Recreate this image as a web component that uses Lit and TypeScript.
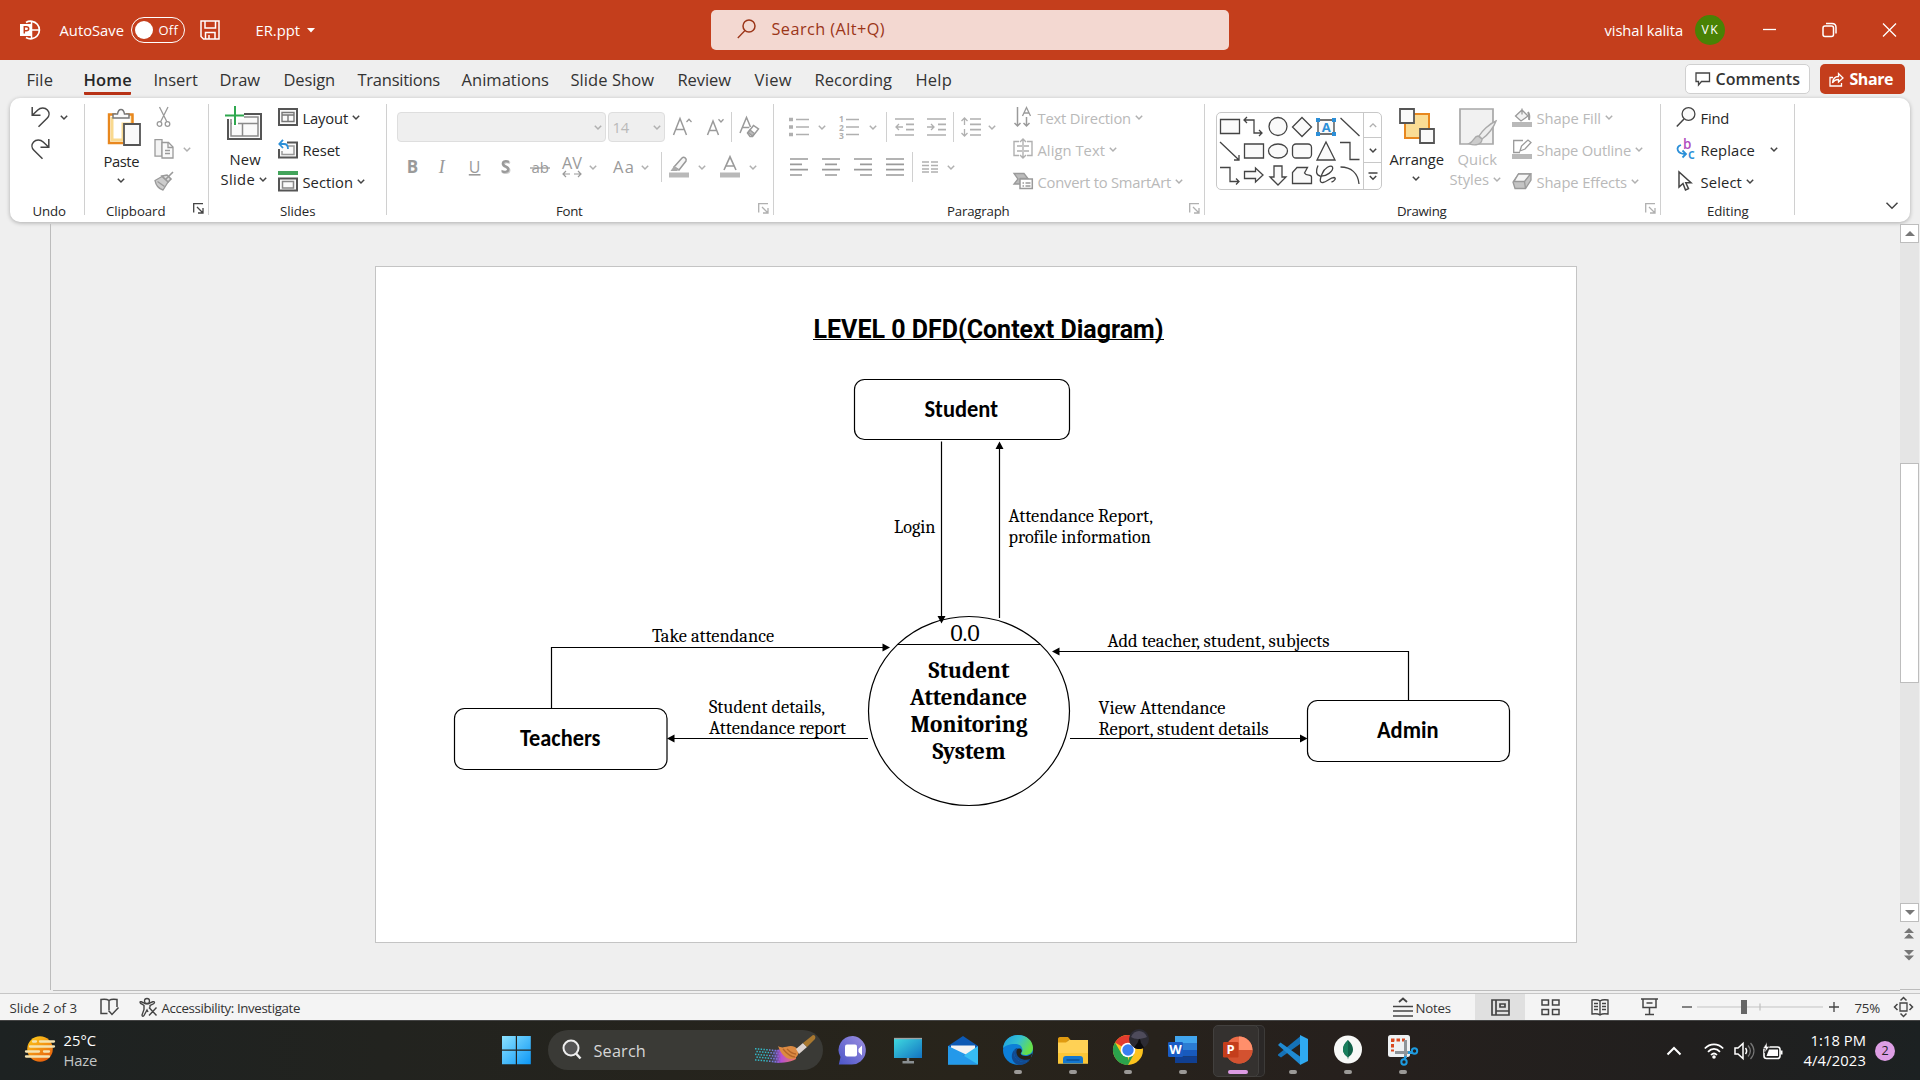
import { LitElement, html, svg, css, TemplateResult, SVGTemplateResult } from "lit";
import { customElement, property } from "lit/decorators.js";

/* ---------- text that keeps a given measure ---------- */

@customElement("fit-text")
class FitText extends LitElement {
  @property({ type: Number }) w = 0;
  @property() text = "";

  static styles = css`
    :host { display: inline-block; white-space: pre; flex: none; overflow: visible; }
    span { margin-left: -.5px; }
  `;

  updated() {
    const span = this.renderRoot.querySelector("span") as HTMLElement;
    span.style.letterSpacing = "0px";
    const natural = span.getBoundingClientRect().width;
    span.style.letterSpacing = `${(this.w + 1.5 - natural) / this.text.length}px`;
    this.style.width = `${this.w}px`;
  }

  render() {
    return html`<span>${this.text}</span>`;
  }
}

const T = (text: string, w: number, cls = "") =>
  html`<fit-text class=${cls} .text=${text} .w=${w}></fit-text>`;

const ic = (w: number, h: number, body: SVGTemplateResult, cls = "") =>
  html`<svg class="ic ${cls}" width=${w} height=${h} viewBox="0 0 ${w} ${h}" fill="none" stroke="currentColor" stroke-width="1.3">${body}</svg>`;

const chev = (cls = "") => ic(8, 5, svg`<path d="M.8 .8 4 4 7.2 .8" stroke-width="1.5"/>`, cls);
const vsep = () => html`<i class="vsep"></i>`;

/* ---------- ribbon icons ---------- */

const undo = ic(20, 20, svg`<path d="M1.2 0v8.3h8.3M1.5 8 6.8 3C9.5.4 14 .3 16.4 3c2.4 2.6 2 6-.3 8.300L7.500 19.800" stroke-width="1.5"/>`);
const redo = ic(20, 20, svg`<path d="M17.800 0v8.300H9.500M17.500 8 12.200 3C9.500.4 5 .3 2.600 3c-2.400 2.600-2 6 .3 8.300L11.500 19.800" stroke-width="1.5"/>`);
const launcher = (cls: string) => ic(11, 11, svg`<path d="M.7 9.500V.7H10M4 4l5.500 5.500M10 5v5H5" stroke-width="1.300"/>`, cls);

const paste = ic(34, 38, svg`
  <path d="M1 6h25v30H1z" fill="#fff" stroke="none"/><path d="M9 6.500H2v28.500h14" stroke="#e8871e" stroke-width="2.400"/>
  <path d="M5 9v23h11V16h9V6.500" stroke="#f9d98f" stroke-width="3"/><path d="M19 6.500h6.500V15" stroke="#e8871e" stroke-width="2.400"/>
  <path d="M6 10V6h4.500c.5-3 1.500-4.500 3.500-4.500S17 3 17.500 6H22v4z" fill="#fafafa" stroke="#777" stroke-width="1.500"/>
  <path d="M17 16h16v21H17z" fill="#fafafa" stroke="#555" stroke-width="1.800"/>`);
const cut = ic(20, 20, svg`<path d="M5.500 0 13 15M14 0 6.500 15"/><circle cx="5.500" cy="17" r="2.300"/><circle cx="13.500" cy="17" r="2.300"/>`, "gray");
const copy = ic(20, 20, svg`<path d="M1 .7h7v16.500H1z" fill="#f3f3f3"/><path d="M8 3.500h6.500l4.500 4.500v11H8z" fill="#fafafa"/><path d="M14 3.500V8.500h5M11 11.500h5M11 14.500h5"/>`, "gray");
const painter = ic(20, 20, svg`<path d="M19 1l-7 7M13 4l4 4-3 3-6-6z" fill="#ddd" stroke-width="1.600"/><path d="M8 5.500 1 9.500c1 5 4 8.500 8 9.500l5-8z" fill="#ccc"/><path d="M3.500 10.500l7 5"/>`, "gray");
const newSlide = ic(37, 34, svg`
  <path d="M3 8h33v25H3z" fill="#fafafa" stroke="#555" stroke-width="2"/>
  <path d="M6 11h27v19H6zM6 17.500h27M17.500 17.500V30" stroke="#8a8a8a" stroke-width="1.500"/>
  <path d="M10 0v20M0 10h19" stroke="#fff" stroke-width="6"/><path d="M10 0v19M0 9.500h19" stroke="#2fa84f" stroke-width="2"/>`);
const layout = ic(20, 20, svg`<path d="M1 2h18v16H1z" fill="#fafafa" stroke="#555" stroke-width="2"/><path d="M4 5.500h12v9H4zM4 8h12M10 8v6.500" stroke="#777" stroke-width="1.400"/>`);
const reset = ic(20, 20, svg`<path d="M9 3.500h10v15H1V10" fill="#fafafa" stroke="#555" stroke-width="2"/><path d="M9 7h7v8.500H4V12" stroke="#999" stroke-width="1.500"/><path d="M5 .8 1.300 5 5 9M1.500 5H6c2.500 0 4 1.500 4 5" stroke="#2b8fd8" stroke-width="1.800"/>`);
const section = ic(20, 20, svg`<path d="M0 0h20v4H0z" fill="#43a45b" stroke="none"/><path d="M1 7.500h18V19.500H1z" fill="#fafafa" stroke="#555" stroke-width="2"/><path d="M4.500 10.500h11v6.500h-11z" stroke="#888" stroke-width="1.500"/>`);

const glyph = (s: string, cls: string) => ic(16, 22, svg`<text x=".8" y="17" class=${cls}>${s}</text>`, "gray");
const growA = ic(20, 20, svg`<path d="M.5 18 7 1.500 13.500 18M2.800 12.500h8.400" stroke-width="1.500"/><path d="M13.500 5 16 2.300 18.500 5"/>`, "gray");
const shrinkA = ic(20, 20, svg`<path d="M1.500 18 7 4l5.500 14M3.500 13.500h7" stroke-width="1.500"/><path d="M12.500 2.300 15 5l2.500-2.700"/>`, "gray");
const clearA = ic(20, 22, svg`<path d="M1 17 7.500 1.500 11.500 11M3.300 11.500h7" stroke-width="1.500"/><path d="M8.500 17 14.500 9.500l5 3.500-6 7.500h-2.500z" fill="#fff" stroke-width="1.500"/><path d="M9 16.500l4.500 3.500 2-2.500-4.500-3.500z" fill="#bbb"/>`, "gray");
const strike = ic(20, 20, svg`<text x="1.500" y="15.500" class="t15">ab</text><path d="M0 11h20"/>`, "gray");
const avIcon = ic(22, 22, svg`<text x="0" y="12.500" class="t16" textLength="20" lengthAdjust="spacingAndGlyphs">AV</text><path d="M1 18h7M12 18h7M4 15l-3 3 3 3M16 15l3 3-3 3" stroke-width="1.200"/>`, "gray");
const aaIcon = ic(22, 20, svg`<text x="0" y="15.500" class="t16" textLength="21">Aa</text>`, "gray");
const highlight = ic(20, 22, svg`<path d="M5 11 13 2c2-2 5 .5 4 3l-7 9z" fill="#f6f6f6" stroke-width="1.500"/><path d="M5 10l-3.500 5H8l2-1.500z" fill="#aaa" stroke="none"/><path d="M0 16.500h20v5H0z" fill="#b9b9b9" stroke="none"/>`, "gray");
const fontColor = ic(20, 22, svg`<path d="M4 14 10 .8 16 14M6 10h8" stroke-width="1.600"/><path d="M0 16.500h20v5H0z" fill="#b9b9b9" stroke="none"/>`, "gray");
const bullets = ic(20, 20, svg`<path d="M0 2.500h4M0 10h4M0 17.500h4" stroke-width="3.500"/><path d="M7 2.500h13M7 10h13M7 17.500h13" stroke-width="1.700"/>`, "gray2");
const numbering = ic(20, 24, svg`<text x="0" y="7" class="t8">1</text><text x="0" y="15.500" class="t8">2</text><text x="0" y="23.500" class="t8">3</text><path d="M7 4.500h13M7 12h13M7 19.500h13" stroke-width="1.700"/>`, "gray2");
const outdent = ic(19, 20, svg`<path d="M0 2h19M11 7.300h8M11 12.600h8M0 18h19" stroke-width="1.700"/><path d="M8 10H1M4 7l-3 3 3 3"/>`, "gray2");
const indent = ic(19, 20, svg`<path d="M0 2h19M11 7.300h8M11 12.600h8M0 18h19" stroke-width="1.700"/><path d="M0 10h7M4 7l3 3-3 3"/>`, "gray2");
const spacing = ic(20, 20, svg`<path d="M9 2h11M9 7.300h11M9 12.600h11M9 18h11" stroke-width="1.700"/><path d="M3.500 1v7M.5 4l3-3 3 3M3.500 12v7M.5 16l3 3 3-3"/>`, "gray2");
const alignL = ic(19, 20, svg`<path d="M0 2h18M0 7.300h12M0 12.600h18M0 18h12" stroke-width="1.700"/>`, "gray");
const alignC = ic(19, 20, svg`<path d="M0 2h18M3 7.300h12M0 12.600h18M3 18h12" stroke-width="1.700"/>`, "gray");
const alignR = ic(19, 20, svg`<path d="M0 2h18M6 7.300h12M0 12.600h18M6 18h12" stroke-width="1.700"/>`, "gray");
const alignJ = ic(19, 20, svg`<path d="M0 2h18M0 7.300h18M0 12.600h18M0 18h18" stroke-width="1.700"/>`, "gray");
const columns = ic(17, 16, svg`<path d="M0 3h7M9 3h7M0 6.500h7M9 6.500h7M0 10h7M9 10h7M0 13h7M9 13h7" stroke-width="1.300"/>`, "gray2");
const textDir = ic(20, 20, svg`<path d="M4.500 0v19M1.500 16l3 3 3-3M13.500 10v9M10.500 16l3 3 3-3" stroke-width="1.500"/><path d="M9.500 9 13.500 .5 17.500 9M11 6h5"/>`, "gray");
const alignText = ic(20, 20, svg`<path d="M6 2.500H1v14h5M14 2.500h5v14h-5M4 7h5M11 7h5M4 12h5M11 12h5M10 0v19M7 3l3-3 3 3M7 16l3 3 3-3" stroke-width="1.400"/>`, "gray2");
const smartArt = ic(20, 20, svg`<path d="M1 2.500h10l4 5H7.500v5.500H1L5 8z" fill="#bbb"/><path d="M7 8h12.300v9.500H7z" fill="#fff" stroke-width="1.500"/><path d="M9.500 12h1.500M12.500 12h5M9.500 15h1.500M12.500 15h5"/>`, "gray");

const SHAPES: SVGTemplateResult[] = [
  svg`<path d="M2.500 4.500h19v14h-19z" fill="#fafafa"/>`,
  svg`<path d="M5 2 2 5l3 3M2 5h10v13h8M17 15l3 3-3 3"/>`,
  svg`<circle cx="12" cy="11.500" r="9" fill="#fafafa"/>`,
  svg`<path d="M12 2.500l9.500 9.500-9.500 9.500L2.500 12z" fill="#fafafa"/>`,
  svg`<path d="M4 5h16v14H4z" fill="#fafafa"/><path d="M2 3h4v4H2zM18 3h4v4h-4zM2 17h4v4H2zM18 17h4v4h-4z" fill="#2b8fd8" stroke="none"/><text x="7.800" y="16.500" class="blueA">A</text>`,
  svg`<path d="M2.500 3l19 18"/>`,
  svg`<path d="M2 3l19 18M21 16v5h-5"/>`,
  svg`<path d="M2.500 5h19v14h-19z" fill="#fafafa"/>`,
  svg`<ellipse cx="12" cy="12" rx="9.500" ry="7" fill="#fafafa"/>`,
  svg`<rect x="2.500" y="5" width="19" height="14" rx="3.500" fill="#fafafa"/>`,
  svg`<path d="M12 3l9 18H3z" fill="#fafafa"/>`,
  svg`<path d="M2 3.500h10v17h9.500"/>`,
  svg`<path d="M2 4.500h10v14h9M18 15.500l3 3-3 3"/>`,
  svg`<path d="M2.500 8.500h11V5l7.500 7-7.500 7v-3.500h-11z" fill="#fafafa"/>`,
  svg`<path d="M8 3h8v11h4l-8 8-8-8h4z" fill="#fafafa"/>`,
  svg`<path d="M7 4.500h10.500l-3 5.500c2 3.500 7 1 7 4v6.500h-19V9.500z" fill="#fafafa"/>`,
  svg`<path d="M4 2.500C1.500 8 2 12 6 13c6 1 14-5 12.500-9C17 1.500 10 5 8 11c-2 5-3 9 1 8.500 4-.5 7-5 11-5 3 .5 0 4-2.500 4.500"/>`,
  svg`<path d="M2.500 4C13 4 20 10 21 21"/>`,
];

const arrange = ic(36, 36, svg`<path d="M6 6h24v24H6z" fill="#fadc94" stroke="#e8871e" stroke-width="2"/><path d="M1 1h14v14H1zM21 21h14v14H21z" fill="#fafafa" stroke="#555" stroke-width="1.800"/>`);
const quick = ic(39, 38, svg`<path d="M2 1h33v35H2z" fill="#f1f1f1" stroke="#a8a8a8" stroke-width="1.700"/><path d="M38 13c-7 3-14 10-17 15l3 3c6-4 12-12 14-18z" fill="#eee" stroke="#aaa" stroke-width="1.400"/><path d="M20 28c-4 0-4 6-9 7.500 6 3 13 1 13-4.500z" fill="#ccc" stroke="#aaa"/>`);
const fill = ic(20, 20, svg`<path d="M10 1.500v6M10 3l6 6-7 5-5.500-5L10 3z" fill="#f3f3f3"/><path d="M16 5c2 3 1.500 5 1 8" stroke-width="2"/><path d="M0 15h20v5H0z" fill="#b9b9b9" stroke="none"/>`, "gray");
const outline = ic(20, 20, svg`<path d="M11 1.500H1.700v12H8"/><path d="M8 12l1.500-5L16 1l3 2.500-6 6.500z" fill="#fff"/><path d="M0 15h20v5H0z" fill="#b9b9b9" stroke="none"/>`, "gray");
const effects = ic(20, 20, svg`<path d="M1 11 6.500 3H19v6l-5.500 8.500H3z" fill="#c4c4c4"/><path d="M6.500 3 2 10.500h10.500L18.500 3z" fill="#f6f6f6"/><path d="M12.500 10.500l1 7"/>`, "gray");
const find = ic(20, 20, svg`<circle cx="12.500" cy="7" r="6.400" fill="#fafafa"/><path d="M8 12 .8 19.500" stroke-width="1.500"/>`);
const replace = ic(20, 20, svg`<text x="7" y="9.500" class="repB">b</text><text x="12" y="20" class="repC">c</text><path d="M5 6C-.5 8 .5 15 9.500 15M6.500 11.500 10 15l-3.500 3.500" stroke="#2b8fd8" stroke-width="1.800"/>`);
const select = ic(20, 20, svg`<path d="M3 1v15l4-3.500 2.500 6.500 3-1.300-2.700-6H15z" fill="#fff" stroke-width="1.500"/>`);

/* ---------- taskbar icons ---------- */

const haze = ic(32, 30, svg`<defs><linearGradient id="hz" x1="0" y1="0" x2=".6" y2="1"><stop offset="0" stop-color="#ffd21c"/><stop offset="1" stop-color="#e8620c"/></linearGradient></defs>
  <circle cx="15" cy="15" r="12.800" fill="url(#hz)" stroke="none"/>
  <path d="M8 7.500h3M15 7.500h14M5 12.500h24M1 17.500h13M19 17.500h5M1 22.500h23" stroke="#f5e3b0" stroke-width="2.300" stroke-linecap="round"/>`);
const start = ic(30, 30, svg`<defs><linearGradient id="st" x1="0" y1="0" x2="1" y2="1"><stop offset="0" stop-color="#8ce2ff"/><stop offset="1" stop-color="#0c97f5"/></linearGradient></defs>
  <path d="M0 1h13.800v13.500H0zM15 1h13.800v13.500H15zM0 15.800h13.800v13.500H0zM15 15.800h13.800v13.500H15z" fill="url(#st)" stroke="none"/>`);
const lens = ic(20, 22, svg`<circle cx="9" cy="9" r="7.500" fill="#555" stroke="#eee" stroke-width="2"/><path d="M14 14.500l4.500 5" stroke="#eee" stroke-width="2.500"/>`);
const dots = Array.from({ length: 45 }, (_, i) => {
  const c = i % 9, r = Math.floor(i / 9);
  return svg`<rect x=${1 + c * 2.8 + (r % 2) * 1.4} y=${13 + r * 2.8 + c * .25} width="1.500" height="1.500" fill=${c < 5 ? "#35b6c4" : "#7487dc"} stroke="none"/>`;
});
const brush = ic(64, 30, svg`<defs><linearGradient id="bp" x1="0" x2="1"><stop offset="0" stop-color="#5c6ae0" stop-opacity="0"/><stop offset=".4" stop-color="#b44fd6"/><stop offset="1" stop-color="#f07a5a"/></linearGradient></defs>
  ${dots}<path d="M17 16c9-2 13-3 23-1l2 9c-6 4-17 4-25 4z" fill="url(#bp)" stroke="none"/>
  <path d="M24 11c6 4 10-2 17 1 5 3 4 9 0 11-6 3-13-1-17-12z" fill="#dc8a42" stroke="none"/><path d="M29 14c5 6 8 8 12 8M33 14c3 3 6 5 9 5" stroke="#b4652a"/>
  <path d="M42 14 49 8l4 4-8 7z" fill="#dcd3cf" stroke="none"/><path d="M49 8 59 0c2 0 3 2 2 4l-8 8z" fill="#a9782f" stroke="none"/>`);
const chat = svg`<defs><linearGradient id="ch" x1="1" y1="0" x2="0" y2="1"><stop offset="0" stop-color="#9d8fe0"/><stop offset="1" stop-color="#4b55c8"/></linearGradient></defs>
  <path d="M15 1a14 14 0 1 1-3 28.500H.8L2.500 22A14 14 0 0 1 15 1z" fill="url(#ch)" stroke="none"/><rect x="7" y="9.500" width="12" height="12" rx="2" fill="#fff" stroke="none"/><path d="M20.500 14l3.500-3.500v10L20.500 17z" fill="#fff" stroke="none"/>`;
const monitor = svg`<defs><linearGradient id="mo" x1="0" y1="0" x2="1" y2="1"><stop offset="0" stop-color="#3fdbe0"/><stop offset="1" stop-color="#1373c2"/></linearGradient></defs>
  <path d="M1 3h28v20H1z" fill="url(#mo)" stroke="none"/><path d="M1 3.500h28" stroke="#9ea4a6"/><path d="M15 23v4M9.500 27.300h11.500" stroke="#8a8f92" stroke-width="2.400"/>`;
const mail = svg`<path d="M0 11 15 1l15 10v4H0z" fill="#0c59b4" stroke="none"/><path d="M3 10.500h24V20H3z" fill="#f3f3f3" stroke="none"/><path d="M0 11l15 10 15-10v18.500H0z" fill="#36bdf3" stroke="none"/><path d="M0 29.500V11l30 18.500z" fill="#2499ea" stroke="none"/><path d="M0 11v1l15 9 3-1.500z" fill="#2499ea" stroke="none"/>`;
const edge = svg`<defs><linearGradient id="e1" x1="0" y1="0" x2="1" y2=".4"><stop offset="0" stop-color="#1b9de2"/><stop offset=".55" stop-color="#35c1d0"/><stop offset="1" stop-color="#66e04a"/></linearGradient></defs>
  <circle cx="15" cy="15" r="15" fill="#0d7fd8" stroke="none"/>
  <path d="M0 13C1 5 7 0 15 0c9 0 15 6 15 13 0 5-4 7-7.500 7-4 0-5-1.500-3.500-3 1.500-3-.5-8-7-8C6 9 2 11 0 13z" fill="url(#e1)" stroke="none"/>
  <path d="M12 14c-3 6 1 13 9 13 3 0 5-1 6.500-2.500C25 28 21 30 16 30 9 29 6 20 12 14z" fill="#114a91" stroke="none"/>
  <path d="M18.500 17c-2 2 0 4 4.500 4 2.500 0 5-1.500 6.500-3.500L27.500 24.500C24 27 13 26 12 18c0-3 3-5 5-4.500 2 .5 2 2.500 1.500 3.500z" fill="#262219" stroke="none"/>
  <path d="M12 14c-3 6 1 13 9 13 3 0 5.500-1.500 6.500-3-6 2-13 0-14-6-.2-2 .5-4 1.500-5-1 0-2.500.5-3 1z" fill="#114a91" stroke="none"/>`;
const folder = svg`<path d="M0 4c0-1 .5-2 2-2h8l3 3.500h-3L8 10H0z" fill="#e09a10" stroke="none"/><path d="M0 7.500h8L11 5h19v23.500H0z" fill="#ffd155" stroke="none"/><path d="M0 18h30v10.500H0z" fill="#fbc637" stroke="none"/><path d="M5 28.500V24c0-2 1-3 3-3h14c2 0 3 1 3 3v4.500z" fill="#1377cf" stroke="none"/><path d="M8.500 25h13" stroke="#0a4f97" stroke-width="1.500"/>`;
const chrome = svg`<circle cx="15" cy="15" r="15" fill="#fcc31e" stroke="none"/><path d="M15 15 2 7.500A15 15 0 0 1 28 7.500L15 8z" fill="#e33b2e" stroke="none"/><path d="M2 7.500 8.500 18.700 15 22l0 8A15 15 0 0 1 2 7.500z" fill="#2ba24c" stroke="none"/><path d="M21 19 15 30l-2-.1L17 21z" fill="#2ba24c" stroke="none"/>
  <circle cx="15" cy="15" r="7.300" fill="#fff" stroke="none"/><circle cx="15" cy="15" r="5.700" fill="#3a7ff0" stroke="none"/>
  <circle cx="26" cy="4" r="10" fill="#2c2b33" stroke="none"/><path d="M18 2c3-8 13-8 16 0-4 2-12 3-16 0z" fill="#5d5a6c" stroke="none" opacity=".7"/><path d="M26 4c2 0 1.500 3 2 4l3 4.500c-3 2-7 2-10 0L24.500 8z" fill="#0b0b0c" stroke="none"/>`;
const word = svg`<path d="M7 1h22v7H7z" fill="#41a5ee" stroke="none"/><path d="M7 8h22v7H7z" fill="#2b7cd3" stroke="none"/><path d="M7 15h22v6.500H7z" fill="#185abd" stroke="none"/><path d="M7 21.500h22V28H7z" fill="#103f91" stroke="none"/><rect x="0" y="7" width="15" height="15" rx="1.200" fill="#1a5cc4" stroke="none"/><text x="1.300" y="19" class="badgeT" textLength="12.500" lengthAdjust="spacingAndGlyphs">W</text>`;
const ppt = svg`<circle cx="16" cy="15" r="13.500" fill="#ed6c47" stroke="none"/><path d="M16 1.500A13.500 13.500 0 0 1 29.500 15H16z" fill="#ff8f6b" stroke="none"/><path d="M2.500 15h27a13.500 13.500 0 0 1-27 0z" fill="#d35230" stroke="none"/><rect x="0" y="7" width="15.500" height="15.500" rx="1.200" fill="#c43e1c" stroke="none"/><text x="3.500" y="19" class="badgeT">P</text>`;
const vscode = svg`<path d="M0 19.500 22 1.500V9L3 22.500 0 20.500z" fill="#1572b8" stroke="none"/><path d="M0 10l2.500-2.500L22 21.500v8z" fill="#1f8ad2" stroke="none"/><path d="M22 0l8 4v22l-8 4z" fill="#2fa9f0" stroke="none"/>`;
const mongo = svg`<circle cx="15" cy="14.500" r="14" fill="#f7f8f7" stroke="none"/><path d="M15 5c4 4 5 7 5 9.500 0 4-3 6.500-4.500 7.500l-.5 2.500-.5-2.500C13 21 10 18.500 10 14.500 10 12 11 9 15 5z" fill="#116149" stroke="none"/><path d="M15 5v17c-1.500-1-5-3.500-5-7.500C10 12 11 9 15 5z" fill="#1a7f5e" stroke="none"/>`;
const snip = svg`<rect x="0" y="0" width="22" height="22" rx="2.500" fill="#eef1f3" stroke="none"/><path d="M3 5h14M4.500 3.500v13" stroke="#d9481f" stroke-width="3" stroke-dasharray="3.500 2"/><path d="M17.500 5v18M7 17.500h17" stroke="#8d9499" stroke-width="3"/><circle cx="26.500" cy="16" r="2.700" stroke="#1d9be0" stroke-width="2"/><circle cx="16" cy="27" r="2.700" stroke="#1d9be0" stroke-width="2"/><path d="M17.500 21l-1 4M20 17.500h4" stroke="#1d9be0" stroke-width="2.500"/>`;

const APPS: { icon: SVGTemplateResult; state: string }[] = [
  { icon: chat, state: "" }, { icon: monitor, state: "" }, { icon: mail, state: "" },
  { icon: edge, state: "open" }, { icon: folder, state: "open" }, { icon: chrome, state: "open" },
  { icon: word, state: "open" }, { icon: ppt, state: "open active" }, { icon: vscode, state: "open" },
  { icon: mongo, state: "open" }, { icon: snip, state: "open" },
];

/* ---------- slide diagram ---------- */

type Label = [string, number, number, number, string];
const LABELS: Label[] = [
  ["Login", 894, 533, 41.5, "flow"],
  ["Attendance Report,", 1008.5, 522, 144.5, "flow"],
  ["profile information", 1008.5, 543, 142.5, "flow"],
  ["Take attendance", 652, 642, 122, "flow"],
  ["Student details,", 709, 713, 116, "flow"],
  ["Attendance report", 709, 734, 137, "flow"],
  ["Add teacher, student, subjects", 1107.5, 647, 222, "flow"],
  ["View Attendance", 1098.5, 714, 127, "flow"],
  ["Report, student details", 1098.5, 735, 170, "flow"],
  ["0.0", 950.5, 641, 29, "num"],
  ["Student", 928.5, 678, 81, "proc"],
  ["Attendance", 910, 705, 117, "proc"],
  ["Monitoring", 910.5, 732, 117, "proc"],
  ["System", 932.5, 759, 73, "proc"],
  ["Student", 924.5, 417, 73.5, "entity"],
  ["Teachers", 520, 746, 80.5, "entity"],
  ["Admin", 1377, 738, 61.5, "entity"],
  ["LEVEL 0 DFD(Context Diagram)", 813.5, 338, 350, "title"],
];

const TABS: [string, number][] = [
  ["File", 25], ["Home", 47], ["Insert", 43], ["Draw", 39], ["Design", 50], ["Transitions", 81],
  ["Animations", 86], ["Slide Show", 82], ["Review", 52], ["View", 36], ["Recording", 76], ["Help", 35],
];

@customElement("app-root")
class AppRoot extends LitElement {
  static styles = css`
    :host { display: flex; flex-direction: column; width: 1920px; height: 1080px; overflow: hidden; background: #efefef; color: #262626; font: 14.75px/20px "Open Sans", "Noto Sans", sans-serif; }
    * { box-sizing: border-box; }
    .ic { display: block; flex: none; overflow: visible; color: #444; }
    .ic text { stroke: none; fill: currentColor; }
    .gray, .gray .ic { color: #9a9a9a; }
    .gray2 { color: #b0b0b0; }
    .dim { color: #b9b9b9; }
    .dim .ic.chv, .chv.soft { color: #b0b0b0; }
    .t15 { font-size: 15px; } .t16 { font-size: 16.5px; } .t8 { font-size: 8.5px; font-weight: 700; }
    .blueA { font-size: 13px; font-weight: 700; }
    .ic text.blueA { fill: #2b8fd8; }
    .repB, .repC { font-size: 13.5px; font-weight: 600; }
    .ic text.repB { fill: #b04fc0; } .ic text.repC { fill: #2b8fd8; }
    .gB { font-size: 17px; font-weight: 700; }
    .gI { font-size: 18px; font-style: italic; font-family: "Liberation Serif", serif; }
    .gU { font-size: 16px; text-decoration: underline; }
    .gS { font-size: 17px; font-weight: 700; filter: drop-shadow(1px 1px 0 #ccc); }

    .titlebar { height: 60px; flex: none; background: #c43e1c; color: #fff; display: flex; align-items: center; padding-left: 20px; }
    .titlebar .ic { color: #fff; }
    .autosave { margin-left: 20px; }
    .toggle { width: 54px; height: 26px; border: 1.5px solid #fff; border-radius: 13px; margin: 0 15px 0 8px; display: flex; align-items: center; padding-left: 3px; gap: 6px; font-size: 13px; }
    .knob { width: 18px; height: 18px; border-radius: 50%; background: #fff; }
    .doc { margin-left: 36px; }
    .caret { margin-left: 8px; }
    .search { width: 518px; height: 40px; border-radius: 5px; background: #f3d8d1; color: #9b3518; margin-left: 396px; padding: 0 0 2px 26px; display: flex; align-items: center; gap: 15px; font-size: 16.25px; }
    .search .ic { color: #9b3518; }
    .user { margin-left: 376px; }
    .avatar { width: 30px; height: 30px; border-radius: 50%; background: #498205; margin-left: 13px; display: grid; place-items: center; font-size: 12.25px; }
    .win { display: grid; grid-template-columns: 60px 60px 20px; margin-left: 37px; }

    .tabs { height: 38px; flex: none; display: grid; grid-template-columns: 57px 70px 66px 64px 74px 104px 109px 107px 77px 60px 101px 769px 135px 85px; padding-left: 27px; font-size: 16.5px; color: #333; }
    .tab { height: 35px; padding-top: 10px; justify-self: start; }
    .tab.on { font-weight: 600; color: #262626; border-bottom: 3px solid #b83216; border-radius: 1px; }
    .btn { height: 30px; margin-top: 4px; border-radius: 5px; display: flex; align-items: center; font-weight: 600; }
    .comments { width: 125px; background: #fff; border: 1px solid #d0d0d0; padding-left: 9px; gap: 5px; font-size: 16px; }
    .share { width: 85px; background: #c43e1c; color: #fff; padding-left: 9px; gap: 6px; font-size: 16px; font-weight: 700; }
    .share .ic { color: #fff; }

    .ribbon { margin: 0 10px; height: 124px; flex: none; background: #fff; border-radius: 10px; box-shadow: 0 1px 4px rgba(0,0,0,.28); display: flex; }
    .rsep { width: 1px; height: 111px; margin-top: 6px; background: #d0d0d0; flex: none; }
    .group { display: grid; grid-template-rows: 103px 20px; flex: none; }
    .body { display: flex; align-items: flex-start; }
    .foot { display: flex; align-items: center; font-size: 13.25px; padding-right: 4px; }
    .foot .mid { flex: 1; display: flex; justify-content: center; padding-right: 7px; }
    .foot.plain { padding-right: 0; } .foot.plain .mid { padding-right: 0; }
    .g-undo .foot.plain .mid { padding-left: 4px; }
    .foot .ic { margin-top: -5px; }
    .g-undo { width: 74px; } .g-clip { width: 123px; } .g-slides { width: 177px; } .g-font { width: 386px; }
    .g-para { width: 430px; } .g-draw { width: 455px; } .g-edit { width: 133px; }
    .stack { display: grid; grid-template-rows: 20px 20px 20px; gap: 12px; padding-top: 9px; }
    .stack fit-text { margin-top: 1px; height: 19px; }
    .line { display: flex; align-items: center; gap: 5px; }
    .g-undo .stack { padding-left: 21px; }
    .g-undo .line { gap: 9px; }
    .g-clip .body { padding-left: 19px; }
    .pastecol { width: 38px; padding-top: 10px; margin-right: 12px; }
    .pastecol .big { margin-left: 3px; margin-bottom: 5px; }
    .pastecol .low { margin: 7px 0 0 13px; }
    .g-clip .line { gap: 9px; }
    .g-slides .body { padding-left: 12px; gap: 12px; }
    .newcol { width: 45px; padding-top: 8px; }
    .newcol .big { margin: 0 0 9px 4px; }
    .newcol .n { padding-left: 9px; }
    .vsep { width: 1px; height: 30px; background: #d0d0d0; }
    .toolrows { display: grid; grid-template-rows: 30px 30px; gap: 10px; padding-top: 14px; }
    .grid { display: grid; align-items: center; justify-items: start; }
    .g-font .toolrows { padding-left: 10px; }
    .f1 { grid-template-columns: 211px 65px 33px 25px 8px 20px; }
    .f2 { grid-template-columns: 32px 30px 32px 30px 32px 27px 24px 28px 20px 8px 29px 22px 29px 8px; padding-left: 9px; }
    .combo { height: 30px; border: 1px solid #dedede; border-radius: 4px; background: #efefef; color: #b9b9b9; display: flex; align-items: center; justify-content: space-between; padding: 0 3px 0 4px; }
    .combo.name { width: 209px; justify-content: flex-end; } .combo.size { width: 57px; }
    .g-para .toolrows { padding-left: 15px; }
    .p1 { grid-template-columns: 29px 21px 30px 17px 9px 32px 26px 8px 27px 8px; }
    .p2 { grid-template-columns: 32px 32px 32px 26px 10px 25px 8px; padding-left: 1px; }
    .g-para .stack { margin-left: 17px; }
    .g-draw .body { padding-left: 11px; }
    .gallery { width: 166px; height: 78px; margin-top: 14px; border: 1px solid #c8c8c8; border-radius: 5px; display: grid; grid-template-columns: 147px 17px; flex: none; }
    .shapes { display: grid; grid-template-columns: repeat(6, 24px); grid-template-rows: repeat(3, 24px); padding: 2px 0 0 1px; border-right: 1px solid #c8c8c8; }
    .scroller { display: grid; grid-template-rows: 25px 25px 26px; }
    .scroller span { display: grid; place-items: center; border-bottom: 1px solid #c8c8c8; }
    .scroller span:last-child { border-bottom: 0; }
    .arrcol { width: 53px; margin-left: 8px; padding-top: 10px; }
    .arrcol .big { margin: 0 0 5px 9px; }
    .arrcol .low { margin: 7px 0 0 22px; }
    .quickcol { width: 50px; margin-left: 7px; padding-top: 10px; }
    .quickcol .big { margin: 0 0 3px 8px; }
    .quickcol .n { padding-left: 8px; }
    .g-draw .stack { margin-left: 12px; }
    .g-edit .stack { padding-left: 15px; }
    .wide { margin-left: 11px; }
    .collapse { margin: 104px 12px 0 auto; }

    .work { flex: 1; display: flex; min-height: 0; }
    .thumbs { width: 51px; border-right: 1px solid #bcbcbc; margin: 2px 0 3px; }
    .canvas { flex: 1; margin-left: 2px; border-bottom: 1px solid #bcbcbc; margin-bottom: 2px; padding: 44px 0 0 322px; }
    .slide { display: block; width: 1202px; height: 677px; background: #fff; outline: 1px solid #c4c4c4; outline-offset: -1px; }
    .slide text { fill: #000; }
    .flow, .num, .proc { font-family: Cambria, Caladea, "Noto Serif", "Liberation Serif", serif; }
    .flow { font-size: 18.5px; } .num { font-size: 23px; } .proc { font-size: 23.5px; font-weight: 700; }
    .entity { font-family: Calibri, Carlito, Lato, sans-serif; font-weight: 700; font-size: 23.5px; }
    .title { font-family: Bahnschrift, Roboto, sans-serif; font-weight: 700; font-size: 25px; }
    .vscroll { width: 20px; margin-bottom: 3px; border-bottom: 1px solid #bcbcbc; padding-top: 2px; display: flex; flex-direction: column; }
    .sb { width: 19px; height: 19px; border: 1px solid #bdbdbd; background: #fff; display: grid; place-items: center; flex: none; }
    .track { height: 660px; width: 19px; background: #e5e5e5; padding-top: 220px; }
    .thumb { height: 220px; background: #fff; border: 1px solid #bdbdbd; }
    .dbl { margin: 6px 0 0 4px; } .dbl + .dbl { margin-top: 11px; }

    .status { height: 28px; flex: none; background: #f4f4f4; border-top: 1px solid #c6c6c6; border-bottom: 1px solid #444; display: flex; align-items: center; padding-left: 10px; font-size: 13.25px; color: #333; }
    .status fit-text { padding-top: 1px; }
    .spell { margin-left: 24px; } .acc { margin: 0 4px 0 20px; }
    .notes { margin-left: 1094px; margin-right: 3px; }
    .views { display: grid; grid-template-columns: repeat(4, 50px); height: 26px; margin-left: 25px; }
    .views span { display: grid; place-items: center; }
    .views .on { background: #e0e0e0; }
    .minus { margin-left: 7px; }
    .slider { margin: 0 6px 0 5px; }
    .pct { margin-left: 16px; }
    .fitw { margin-left: 15px; }

    .taskbar { height: 59px; flex: none; color: #fff; display: flex; background: linear-gradient(90deg, #1d2222, #22231f 20%, #28241b 50%, #26201d 70%, #211f1e 88%, #1c2122); }
    .taskbar .ic { color: #fff; }
    .weather { width: 502px; display: flex; padding: 9px 0 0 25px; gap: 7px; }
    .weather .ic { margin-top: 4px; }
    .two { display: grid; grid-template-rows: 20px 20px; }
    .haze { color: #c2c6c6; }
    .startbtn { margin-top: 14px; width: 46px; }
    .pill { width: 275px; height: 40px; margin-top: 9px; border-radius: 20px; background: #3a3a36; display: flex; align-items: center; padding-left: 14px; font-size: 16.25px; color: #d6d6d6; }
    .pill .q { margin-left: 12px; padding-top: 1px; } .pill .art { margin-left: 109px; }
    .apps { display: grid; grid-template-columns: repeat(11, 55px); margin-left: 2px; }
    .app { display: flex; flex-direction: column; align-items: center; padding-top: 14px; position: relative; }
    .app .ic { position: relative; }
    .open::after { content: ""; width: 8px; height: 4px; border-radius: 2px; background: #9b9997; margin-top: 5px; position: relative; }
    .active::after { width: 20px; background: #dd9be4; }
    .active::before { content: ""; position: absolute; left: 3px; top: 4px; width: 44px; height: 50px; border-radius: 5px; background: #34312f; border: 1px solid #42403e; box-shadow: 6px 0 0 -1px #2b2827, 6px 0 0 0 #3d3b39; }
    .badgeT { font-size: 13px; font-weight: 700; }
    .tray { margin-left: 236px; display: flex; align-items: center; }
    .wifi { margin-left: 22px; } .snd { margin-left: 10px; } .bat { margin-left: 9px; }
    .clock { width: 62px; margin: -1px 10px 0 20px; display: grid; grid-template-rows: 20px 20px; justify-items: end; }
    .count { width: 20px; height: 20px; border-radius: 50%; background: #dd9ee4; color: #222; font-size: 12.5px; display: grid; place-items: center; }
  `;

  private foot(label: string, w: number, launch = "") {
    return html`<div class="foot ${launch ? "" : "plain"}"><div class="mid">${T(label, w)}</div>${launch ? launcher(launch) : ""}</div>`;
  }

  private titlebar() {
    return html`<div class="titlebar">
      ${ic(20, 20, svg`<path d="M6 2.500a8.800 8.800 0 1 1 0 15" stroke-width="1.700"/><path d="M11.500 1v18M11.500 10h7.500" stroke-width="1.500"/><path d="M0 4h11.500v12H0z" fill="#fff" stroke="none"/><path d="M4.300 13.500V6.800h2c3.200 0 3.200 4 0 4h-2" stroke="#c43e1c" stroke-width="1.500"/>`)}
      ${T("AutoSave", 63, "autosave")}
      <div class="toggle"><i class="knob"></i>${T("Off", 18)}</div>
      ${ic(20, 20, svg`<path d="M1 1h18v18H3.500L1 16.500zM5 1v7h10.500V1M5.500 19v-6.500H15V19M9 15v4" stroke-width="1.500"/>`)}
      ${T("ER.ppt", 43, "doc")}
      ${ic(8, 5, svg`<path d="M0 0h8L4 4.500z" fill="#fff" stroke="none"/>`, "caret")}
      <div class="search">${ic(20, 20, svg`<circle cx="12" cy="7" r="6" stroke-width="1.500"/><path d="M8 11.500 .8 19"/>`)}${T("Search (Alt+Q)", 112)}</div>
      ${T("vishal kalita", 77, "user")}
      <div class="avatar">${T("VK", 16)}</div>
      <div class="win">
        ${ic(16, 16, svg`<path d="M1 7.500h13"/>`)}
        ${ic(16, 16, svg`<rect x="1" y="4" width="10.500" height="10.500" rx="2" stroke-width="1.500"/><path d="M4 1.500h6c3 0 4 1 4 4v6" stroke-width="1.500"/>`)}
        ${ic(16, 16, svg`<path d="M1 1.500l13 13M14 1.500l-13 13"/>`)}
      </div>
    </div>`;
  }

  private tabs() {
    return html`<div class="tabs">
      ${TABS.map(([t, w]) => html`<div class="tab ${t === "Home" ? "on" : ""}">${T(t, w)}</div>`)}
      <div class="btn comments">${ic(16, 16, svg`<path d="M1 2h13.500v8.500H6.500L3.500 14v-3.500H1z"/>`)}${T("Comments", 83)}</div>
      <div class="btn share">${ic(15, 15, svg`<path d="M4 5.500H1v8.500h11.500V11"/><path d="M3.500 11C4 6.500 6.500 4.500 9.500 4.500V1.500L14 6 9.500 10V7.500C7 7.500 5 8.500 3.500 11z"/>`)}${T("Share", 42)}</div>
    </div>`;
  }

  private cmd(icon: TemplateResult, text: string, w: number, arrow = true, wide = false) {
    return html`<div class="line">${icon}${T(text, w)}${arrow ? chev(`chv ${wide ? "wide" : ""}`) : ""}</div>`;
  }

  private ribbon() {
    const sep = html`<i class="rsep"></i>`;
    return html`<div class="ribbon">
      <section class="group g-undo">
        <div class="body"><div class="stack"><div class="line">${undo}${chev()}</div><div class="line">${redo}</div></div></div>
        ${this.foot("Undo", 32)}
      </section>${sep}
      <section class="group g-clip">
        <div class="body">
          <div class="pastecol"><div class="big">${paste}</div>${T("Paste", 34)}${chev("low")}</div>
          <div class="stack"><div class="line">${cut}</div><div class="line">${copy}${chev("chv soft")}</div><div class="line">${painter}</div></div>
        </div>
        ${this.foot("Clipboard", 58, "dark")}
      </section>${sep}
      <section class="group g-slides">
        <div class="body">
          <div class="newcol"><div class="big">${newSlide}</div><div class="line n">${T("New", 30)}</div><div class="line">${T("Slide", 33)}${chev()}</div></div>
          <div class="stack">${this.cmd(layout, "Layout", 44)}${this.cmd(reset, "Reset", 36, false)}${this.cmd(section, "Section", 49)}</div>
        </div>
        ${this.foot("Slides", 34)}
      </section>${sep}
      <section class="group g-font">
        <div class="body"><div class="toolrows">
          <div class="grid f1">
            <div class="combo name">${chev("gray2")}</div><div class="combo size">${T("14", 15)}${chev("gray2")}</div>
            ${growA}${shrinkA}${vsep()}${clearA}
          </div>
          <div class="grid f2">
            ${glyph("B", "gB")}${glyph("I", "gI")}${glyph("U", "gU")}${glyph("S", "gS")}${strike}${avIcon}${chev("gray2")}${aaIcon}${chev("gray2")}${vsep()}${highlight}${chev("gray2")}${fontColor}${chev("gray2")}
          </div>
        </div></div>
        ${this.foot("Font", 25, "gray2")}
      </section>${sep}
      <section class="group g-para">
        <div class="body">
          <div class="toolrows">
            <div class="grid p1">${bullets}${chev("gray2")}${numbering}${chev("gray2")}${vsep()}${outdent}${indent}${vsep()}${spacing}${chev("gray2")}</div>
            <div class="grid p2">${alignL}${alignC}${alignR}${alignJ}${vsep()}${columns}${chev("gray2")}</div>
          </div>
          <div class="stack dim">${this.cmd(textDir, "Text Direction", 92)}${this.cmd(alignText, "Align Text", 66)}${this.cmd(smartArt, "Convert to SmartArt", 132)}</div>
        </div>
        ${this.foot("Paragraph", 61, "gray2")}
      </section>${sep}
      <section class="group g-draw">
        <div class="body">
          <div class="gallery">
            <div class="shapes">${SHAPES.map((s) => ic(24, 24, s))}</div>
            <div class="scroller">
              <span>${ic(8, 5, svg`<path d="M.8 4 4 .8 7.200 4"/>`, "gray2")}</span><span>${chev()}</span>
              <span>${ic(10, 9, svg`<path d="M.5 1h9M1.800 4 5 7.200 8.200 4" stroke-width="1.500"/>`)}</span>
            </div>
          </div>
          <div class="arrcol"><div class="big">${arrange}</div>${T("Arrange", 53)}${chev("low")}</div>
          <div class="quickcol dim"><div class="big">${quick}</div><div class="line n">${T("Quick", 38)}</div><div class="line">${T("Styles", 38)}${chev("chv")}</div></div>
          <div class="stack dim">${this.cmd(fill, "Shape Fill", 63)}${this.cmd(outline, "Shape Outline", 93)}${this.cmd(effects, "Shape Effects", 89)}</div>
        </div>
        ${this.foot("Drawing", 48, "gray2")}
      </section>${sep}
      <section class="group g-edit">
        <div class="body"><div class="stack">${this.cmd(find, "Find", 27, false)}${this.cmd(replace, "Replace", 53, true, true)}${this.cmd(select, "Select", 40)}</div></div>
        ${this.foot("Editing", 40)}
      </section>${sep}
      <div class="collapse">${ic(12, 7, svg`<path d="M.5 .8 6 6.200 11.500 .8" stroke-width="1.500"/>`)}</div>
    </div>`;
  }

  private diagram() {
    return html`<svg class="slide" viewBox="375 266 1202 677" fill="none" stroke="#000" stroke-width="1.200">
      <path d="M813 339.500H1164" stroke-width="1.200"/>
      <rect x="854.500" y="379.500" width="215" height="60" rx="10"/>
      <rect x="454.500" y="708.500" width="212.500" height="61" rx="10"/>
      <rect x="1307.500" y="700.500" width="202" height="61" rx="10"/>
      <ellipse cx="969" cy="711" rx="100.500" ry="94.500"/>
      <path d="M897 644.500H1041M941.500 441.500V618M999.500 447V618M551.500 708.500V647.500H884M868 738.500H672M1408.500 700.500V651.500H1058M1070 738.500H1302"/>
      <path d="M937.500 616h8l-4 7.500zM995.500 449h8l-4-7.500zM882.500 643.500v8l7.500-4zM674.500 734.500v8l-7.500-4zM1059.500 647.500v8l-7.500-4zM1300 734.500v8l7.500-4z" fill="#000" stroke="none"/>
      ${LABELS.map(([t, x, y, w, c]) => svg`<text x=${x} y=${y} textLength=${w} lengthAdjust="spacingAndGlyphs" class=${c} stroke="none">${t}</text>`)}
    </svg>`;
  }

  private work() {
    const dbl = (d: string) => ic(10, 11, svg`<path d=${d} fill="#777" stroke="none"/>`, "dbl");
    return html`<div class="work">
      <div class="thumbs"></div>
      <div class="canvas">${this.diagram()}</div>
      <div class="vscroll">
        <div class="sb">${ic(10, 5, svg`<path d="M0 5h10L5 0z" fill="#777" stroke="none"/>`)}</div>
        <div class="track"><div class="thumb"></div></div>
        <div class="sb">${ic(10, 5, svg`<path d="M0 0h10L5 5z" fill="#777" stroke="none"/>`)}</div>
        ${dbl("M0 5h10L5 0zM0 10.500h10L5 5.500z")}${dbl("M0 0h10L5 5zM0 5.500h10L5 10.500z")}
      </div>
    </div>`;
  }

  private status() {
    return html`<div class="status">
      ${T("Slide 2 of 3", 66)}
      ${ic(19, 18, svg`<path d="M9 2.500C7 1 4 1 1 1.500v14h6.500M9 2.500C11 1 14 1 17 1.500V9M9 2.500V12M8.500 12.500l3.500 4 6.500-7" stroke-width="1.500"/>`, "spell")}
      ${ic(19, 19, svg`<circle cx="8" cy="3" r="2.500"/><path d="M1 4.500c0-2 3 0 4.500.8 1.500.7 3.500.7 5 0C12 4.500 15 2.500 15.500 4.500c0 1.500-3 2-4.500 3v2M1 4.500C1.500 6 4 6.500 5 7.500v4L3 17c0 1.500 1.500 1.500 2 .5L8 12l1 2M10 9.500l7.500 8M17.500 9.500l-7.500 8" stroke-width="1.400"/>`, "acc")}
      ${T("Accessibility: Investigate", 137)}
      ${ic(20, 20, svg`<path d="M6 5 10 1.500 14 5" stroke-width="1.800"/><path d="M0 9.500h20M0 14h20M0 19h20" stroke-width="1.400"/>`, "notes")}
      ${T("Notes", 34)}
      <div class="views">
        <span class="on">${ic(19, 17, svg`<path d="M1 1h17v15H1zM5 1v15M5 12h13M9 5h5v3H9z" stroke-width="1.700"/>`)}</span>
        <span>${ic(19, 17, svg`<path d="M1 1h6.500v5H1zM11.500 1H18v5h-6.500zM1 10.500h6.500v5H1zM11.500 10.500H18v5h-6.500z" stroke-width="1.500"/>`)}</span>
        <span>${ic(18, 17, svg`<path d="M9 2C7 .5 4 .5 1 1v14c3-.5 6-.5 8 1 2-1.500 5-1.500 8-1V1c-3-.5-6-.5-8 1zM9 2v14M3 4.500h4M3 7.500h4M3 10.500h4M11 4.500h4M11 7.500h4M11 10.500h4" stroke-width="1.400"/>`)}</span>
        <span>${ic(18, 18, svg`<path d="M0 1h17M2 1v8.500h13V1M8.500 9.500V16M4 16.500h9M5.500 5h6" stroke-width="1.500"/>`)}</span>
      </div>
      ${ic(10, 10, svg`<path d="M0 5h10"/>`, "minus")}
      ${ic(126, 16, svg`<path d="M0 8h126" stroke="#c3c3c3" stroke-width="1"/><path d="M63 4.500v7" stroke="#c3c3c3"/><path d="M44 1h6v14h-6z" fill="#666" stroke="none"/>`, "slider")}
      ${ic(10, 10, svg`<path d="M0 5h10M5 0v10"/>`)}
      ${T("75%", 24, "pct")}
      ${ic(19, 20, svg`<path d="M6 6h7v8H6z"/><path d="M6.500 3.500l3-3 3 3M6.500 16.500l3 3 3-3M3.500 7l-3 3 3 3M15.500 7l3 3-3 3" stroke-width="1.500"/>`, "fitw")}
    </div>`;
  }

  private taskbar() {
    return html`<div class="taskbar">
      <div class="weather">${haze}<div class="two">${T("25°C", 31)}${T("Haze", 32, "haze")}</div></div>
      <div class="startbtn">${start}</div>
      <div class="pill">${lens}${T("Search", 51, "q")}<div class="art">${brush}</div></div>
      <div class="apps">${APPS.map((a) => html`<div class="app ${a.state}">${ic(30, 30, a.icon)}</div>`)}</div>
      <div class="tray">
        ${ic(16, 10, svg`<path d="M1.500 8.500 8 2l6.500 6.500" stroke-width="2"/>`)}
        ${ic(20, 16, svg`<path d="M.8 5.500C6 0 14 0 19.200 5.500M4 8.800C7.500 5 12.500 5 16 8.800M7 12c2-2 4-2 6 0" stroke-width="1.700"/><circle cx="10" cy="14" r="1.800" fill="#fff" stroke="none"/>`, "wifi")}
        ${ic(20, 18, svg`<path d="M1 6h3l5-4.500v15L4 12H1z" stroke-width="1.500"/><path d="M11.500 6c1.500 2 1.500 4 0 6" stroke-width="1.500"/><path d="M14 3.500c3 3.500 3 7.500 0 11M16.500 1c4.500 5 4.500 11 0 16" stroke="#777"/>`, "snd")}
        ${ic(20, 16, svg`<rect x="1" y="4" width="16" height="11.500" rx="2.500" stroke-width="1.600"/><path d="M6 6.500h9v6.500H3.500z" fill="#fff" stroke="none"/><path d="M18.500 7.500v4" stroke-width="2"/><path d="M4 -1 0 5.500h2.500L1.500 10 6.500 3.500H4z" fill="#fff" stroke="#211f1e" stroke-width=".6"/>`, "bat")}
        <div class="clock">${T("1:18 PM", 54)}${T("4/4/2023", 61)}</div>
        <div class="count">2</div>
      </div>
    </div>`;
  }

  render() {
    return html`${this.titlebar()}${this.tabs()}${this.ribbon()}${this.work()}${this.status()}${this.taskbar()}`;
  }
}
